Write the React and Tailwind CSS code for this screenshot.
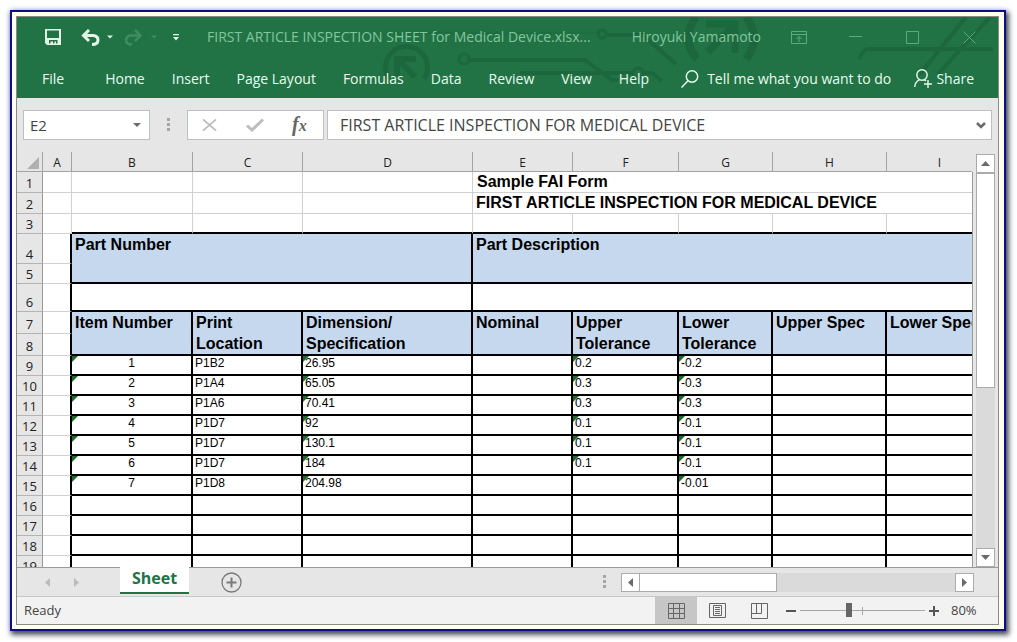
import React from "react";

const TABS = ["Home", "Insert", "Page Layout", "Formulas", "Data", "Review", "View", "Help"];

const ROWS = [
  { n: 9, cells: ["1", "P1B2", "26.95", "", "0.2", "-0.2"] },
  { n: 10, cells: ["2", "P1A4", "65.05", "", "0.3", "-0.3"] },
  { n: 11, cells: ["3", "P1A6", "70.41", "", "0.3", "-0.3"] },
  { n: 12, cells: ["4", "P1D7", "92", "", "0.1", "-0.1"] },
  { n: 13, cells: ["5", "P1D7", "130.1", "", "0.1", "-0.1"] },
  { n: 14, cells: ["6", "P1D7", "184", "", "0.1", "-0.1"] },
  { n: 15, cells: ["7", "P1D8", "204.98", "", "", "-0.01"] },
  { n: 16, cells: [] },
  { n: 17, cells: [] },
  { n: 18, cells: [] },
  { n: 19, cells: [] },
];

const HEADINGS = [
  ["Item Number"],
  ["Print", "Location"],
  ["Dimension/", "Specification"],
  ["Nominal"],
  ["Upper", "Tolerance"],
  ["Lower", "Tolerance"],
  ["Upper Spec"],
  ["Lower Spec"],
];

function Circuit() {
  return (
    <svg className="pointer-events-none absolute top-0 right-0" width="618" height="81" viewBox="380 17 618 81" fill="none" stroke="#1d673e" aria-hidden="true">
      <path d="M389 79 A21 21 0 1 1 424 79" strokeWidth="5" />
      <path d="M397 78 V59 H416 M399 61 L415 77" strokeWidth="6" />
      <circle cx="464" cy="59" r="5" strokeWidth="3" />
      <path d="M469 60 H585 L612 80 H618" strokeWidth="4" />
      <path d="M520 73 H632" strokeWidth="4" />
      <circle cx="638" cy="73" r="5" strokeWidth="3" />
      <path d="M644 73 H652 L662 81" strokeWidth="4" />
      <path d="M386 33 H597" strokeWidth="3" opacity=".4" />
      <circle cx="602" cy="34" r="4" strokeWidth="3" />
      <path d="M607 35 H642 L676 64" strokeWidth="4" />
      <path d="M696 17 Q680 38 697 59 M746 17 Q762 38 746 59" strokeWidth="8" />
      <path d="M706 24 H735 V53 M733 26 L708 52" strokeWidth="7" />
      <path d="M854 76 Q861 49 867 49 H993" strokeWidth="4" pathLength="100" strokeDasharray="100" strokeDashoffset="-11" />
      <path d="M920 74 L966 17 M938 74 L990 17" strokeWidth="4" />
    </svg>
  );
}

function Caret({ className }) {
  return (
    <svg className={className} width="8" height="4" viewBox="0 0 8 4" fill="currentColor" aria-hidden="true">
      <path d="M0 0H8L4 4Z" />
    </svg>
  );
}

function Dots({ className }) {
  return (
    <svg className={className} width="3" height="14" viewBox="0 0 3 14" fill="#a6a6a6" aria-hidden="true">
      <path d="M0 0h3v3H0zM0 5h3v3H0zM0 10h3v3H0z" />
    </svg>
  );
}

function TitleBar() {
  return (
    <div className="relative flex h-10 items-center">
      <div className="flex w-[190px] items-center pl-7 text-[#e3f7e6]">
        <button type="button" aria-label="Save">
          <svg className="block" width="16" height="16" viewBox="0 0 16 16">
            <path fill="currentColor" fillRule="evenodd" d="M0 0H16V16H2L0 14ZM2 1.500V9H14V1.500ZM4 11V14.500H5.500V12.500H8V14.500H9.500V12.500H11V14.500H12.500V11Z" />
          </svg>
        </button>
        <button type="button" aria-label="Undo" className="ml-5">
          <svg className="block" width="19" height="17" viewBox="0 0 19 17" fill="none" stroke="currentColor" strokeWidth="3">
            <path d="M2 6.500H12Q17 7 17 11Q17 15.500 11 15.500" />
            <path d="M8 1L2.500 6.500L8 12" />
          </svg>
        </button>
        <button type="button" aria-label="Undo history" className="ml-[7px]">
          <Caret className="block w-[6px]" />
        </button>
        <button type="button" aria-label="Redo" className="ml-[11px] text-[#3f8c60]">
          <svg className="block" width="19" height="17" viewBox="0 0 19 17" fill="none" stroke="currentColor" strokeWidth="2.500">
            <path d="M17 6.500H7Q2 7 2 11Q2 15.500 8 15.500" />
            <path d="M11 1L16.500 6.500L11 12" />
          </svg>
        </button>
        <button type="button" aria-label="Redo history" className="ml-2 text-[#3f8c60]">
          <Caret className="block w-[6px]" />
        </button>
        <button type="button" aria-label="Customize toolbar" className="ml-4">
          <svg className="block" width="6" height="7" viewBox="0 0 6 7" fill="currentColor">
            <path d="M0 0H6V1.300H0ZM0 3H6L3 6.500Z" />
          </svg>
        </button>
      </div>
      <h1 className="min-w-0 truncate text-[14px] leading-5 text-[#84c69c]">FIRST ARTICLE INSPECTION SHEET for Medical Device.xlsx...</h1>
      <span className="ml-auto shrink-0 pr-[9px] text-[14px] leading-5 text-[#84c69c]">Hiroyuki Yamamoto</span>
      <div className="flex shrink-0 text-[#5dab7c]">
        <button type="button" aria-label="Ribbon display options" className="flex w-[57px] justify-center">
          <svg width="16" height="13" viewBox="0 0 16 13" fill="none" stroke="currentColor">
            <path d="M.5 .5H15.500V12.500H.5ZM.5 3.500H15.500M8 11V5.500M5.500 8L8 5.500L10.500 8" />
          </svg>
        </button>
        <button type="button" aria-label="Minimize" className="flex w-[57px] justify-center">
          <svg width="13" height="13" viewBox="0 0 13 13" fill="none" stroke="currentColor">
            <path d="M0 5.500H13" />
          </svg>
        </button>
        <button type="button" aria-label="Maximize" className="flex w-[57px] justify-center">
          <svg width="13" height="13" viewBox="0 0 13 13" fill="none" stroke="currentColor">
            <path d="M.5 .5H12.500V12.500H.5Z" />
          </svg>
        </button>
        <button type="button" aria-label="Close" className="flex w-[57px] justify-center">
          <svg width="13" height="13" viewBox="0 0 13 13" fill="none" stroke="currentColor">
            <path d="M.5 .5L12.500 12.500M12.500 .5L.5 12.500" />
          </svg>
        </button>
      </div>
    </div>
  );
}

function Ribbon() {
  return (
    <nav className="relative flex h-[41px] items-center pt-[2px] pr-6 pl-[25px] text-[14px] leading-5 text-[#e9fbee]">
      <a href="#file" className="mr-[41px]">File</a>
      <div className="flex gap-[27px]">
        {TABS.map((t) => (
          <a key={t} href={"#" + t} className="whitespace-nowrap">{t}</a>
        ))}
      </div>
      <label className="ml-8 flex min-w-0 items-center gap-2">
        <svg className="shrink-0" width="18" height="18" viewBox="0 0 18 18" fill="none" stroke="currentColor" strokeWidth="1.500">
          <circle cx="11" cy="6.500" r="5.700" />
          <path d="M7 10.700L.5 17.500" />
        </svg>
        <input aria-label="Tell me what you want to do" placeholder="Tell me what you want to do" className="w-[188px] min-w-0 bg-transparent p-0 outline-none placeholder:text-[#e9fbee] placeholder:opacity-100" />
      </label>
      <button type="button" className="ml-auto flex shrink-0 items-center gap-1">
        <svg width="18" height="19" viewBox="0 0 18 19" fill="none" stroke="currentColor" strokeWidth="1.400">
          <circle cx="8" cy="6" r="5.200" />
          <path d="M.7 18Q1 12.500 5.500 10.800M10 10.700L12 12M14 11V19M10 15H18" />
        </svg>
        Share
      </button>
    </nav>
  );
}

function FormulaBar() {
  return (
    <div className="flex px-[6px] pt-3 text-[15px] text-[#444]">
      <div className="flex h-[30px] w-[127px] items-center border border-[#bcc0c4] bg-white">
        <input aria-label="Name box" defaultValue="E2" className="min-w-0 flex-1 bg-transparent pl-[6px] text-[15px] outline-none" />
        <button type="button" aria-label="Named ranges" className="mr-2 text-[#6a6a6a]">
          <Caret className="block" />
        </button>
      </div>
      <Dots className="mx-[17px] self-center" />
      <div className="flex h-[30px] w-[137px] items-center border border-[#bcc0c4] bg-white">
        <button type="button" aria-label="Cancel" className="ml-[14px]">
          <svg className="block" width="15" height="14" viewBox="0 0 16 14" fill="none" stroke="#bdbdbd" strokeWidth="2">
            <path d="M1 1L15 13M15 1L1 13" />
          </svg>
        </button>
        <button type="button" aria-label="Enter" className="ml-[29px]">
          <svg className="block" width="18" height="14" viewBox="0 0 18 14" fill="none" stroke="#bdbdbd" strokeWidth="3">
            <path d="M1 7.500L6 12L17 1.500" />
          </svg>
        </button>
        <button type="button" aria-label="Insert function" className="ml-7 font-['Liberation_Serif',serif] text-[20px] leading-6 font-bold text-[#666] italic">
          f<span className="text-[16px]">x</span>
        </button>
      </div>
      <div className="ml-[3px] flex h-[30px] min-w-0 flex-1 items-center border border-[#bcc0c4] bg-white">
        <input aria-label="Formula" defaultValue="FIRST ARTICLE INSPECTION FOR MEDICAL DEVICE" className="min-w-0 flex-1 bg-transparent pl-3 text-[16px] outline-none" />
        <button type="button" aria-label="Expand formula bar" className="mr-[5px]">
          <svg className="block" width="10" height="7" viewBox="0 0 10 7" fill="none" stroke="#6a6a6a" strokeWidth="2.500">
            <path d="M1 1L5 5L9 1" />
          </svg>
        </button>
      </div>
    </div>
  );
}

const rowHead = "border-r border-b border-r-[#9a9a9a] border-b-[#b4b4b4] bg-[#e6e6e6] p-0 text-center align-bottom font-normal text-[13px] leading-[18px] text-[#222] font-['Open_Sans',sans-serif]";
const light = "border-r border-b border-[#d0d0d0] p-0";
const edge = "border-r-2 border-b border-r-black border-b-[#d0d0d0] p-0";
const dark = "relative border-r-2 border-b-2 border-black p-0 last:border-r-0";
const band = "border-r-2 border-b-2 border-black bg-[#c5d8ee] p-0 pl-[3px] text-left align-top text-[16px] leading-[21px] font-bold last:border-r-0";

function RowHead({ n }) {
  return <th scope="row" className={rowHead}>{n}</th>;
}

function DataCell({ value, index }) {
  const flagged = value && index !== 1;
  return (
    <td className={dark}>
      <div className={"h-[18px] overflow-hidden text-[12px] leading-[14px] " + (index === 0 ? "text-center" : "pl-[2px]")}>{value}</div>
      {flagged && (
        <svg className="absolute top-0 left-0" width="6" height="6" viewBox="0 0 6 6" fill="#1d6b2a" aria-hidden="true">
          <path d="M0 0H6L0 6Z" />
        </svg>
      )}
    </td>
  );
}

function Sheet() {
  const blank = (k) => Array.from({ length: k }, (_, i) => <td key={i} className={light} />);
  return (
    <div className="min-w-0 flex-1 overflow-hidden">
      <table className="w-full table-fixed border-separate border-spacing-0 font-['Liberation_Sans',Arial,sans-serif] text-black">
        <colgroup>
          <col className="w-[26px]" />
          <col className="w-[29px]" />
          <col className="w-[121px]" />
          <col className="w-[110px]" />
          <col className="w-[170px]" />
          <col className="w-[100px]" />
          <col className="w-[106px]" />
          <col className="w-[94px]" />
          <col className="w-[114px]" />
          <col />
        </colgroup>
        <thead>
          <tr className="h-5 font-['Open_Sans',sans-serif] text-[12px] leading-[17px] text-[#222]">
            <td className="border-r border-b border-[#a3a3a3] p-0">
              <svg className="mt-1 ml-auto block" width="15" height="13" viewBox="0 0 15 13" fill="#b0b0b0" aria-hidden="true">
                <path d="M12 0V12H0Z" />
              </svg>
            </td>
            {["A", "B", "C", "D", "E", "F", "G", "H"].map((c) => (
              <th key={c} scope="col" className="border-r border-b border-[#a3a3a3] p-0 pt-[2px] font-normal">{c}</th>
            ))}
            <th scope="col" className="border-b border-[#a3a3a3] p-0 pt-[2px] pl-5 font-normal">I</th>
          </tr>
        </thead>
        <tbody className="bg-white">
          <tr className="h-[21px]">
            <RowHead n={1} />
            {blank(4)}
            <td colSpan={5} className="border-b border-[#d0d0d0] p-0 pl-1 text-[16px] leading-5 font-bold">Sample FAI Form</td>
          </tr>
          <tr className="h-[21px]">
            <RowHead n={2} />
            {blank(4)}
            <td colSpan={5} className="border-b border-[#d0d0d0] p-0 pl-[3px] text-[16px] leading-5 font-bold whitespace-nowrap">FIRST ARTICLE INSPECTION FOR MEDICAL DEVICE</td>
          </tr>
          <tr className="h-5">
            <RowHead n={3} />
            <td className={light} />
            {Array.from({ length: 8 }, (_, i) => (
              <td key={i} className="border-r border-b-2 border-r-[#d0d0d0] border-b-black p-0 last:border-r-0" />
            ))}
          </tr>
          <tr className="h-[30px]">
            <RowHead n={4} />
            <td className={edge} />
            <th scope="colgroup" colSpan={3} rowSpan={2} className={band}>Part Number</th>
            <th scope="colgroup" colSpan={5} rowSpan={2} className={band}>Part Description</th>
          </tr>
          <tr className="h-5">
            <RowHead n={5} />
            <td className={edge} />
          </tr>
          <tr className="h-7">
            <RowHead n={6} />
            <td className={edge} />
            <td colSpan={3} className={dark} />
            <td colSpan={5} className={dark} />
          </tr>
          <tr className="h-[22px]">
            <RowHead n={7} />
            <td className={edge} />
            {HEADINGS.map((lines) => (
              <th key={lines.join(" ")} scope="col" rowSpan={2} className={band + " overflow-hidden whitespace-nowrap"}>
                {lines.map((l) => (
                  <span key={l} className="block">{l}</span>
                ))}
              </th>
            ))}
          </tr>
          <tr className="h-[22px]">
            <RowHead n={8} />
            <td className={edge} />
          </tr>
          {ROWS.map(({ n, cells }) => (
            <tr key={n} className="h-5">
              <RowHead n={n} />
              <td className={edge} />
              {Array.from({ length: 8 }, (_, i) => (
                <DataCell key={i} index={i} value={cells[i]} />
              ))}
            </tr>
          ))}
        </tbody>
      </table>
    </div>
  );
}

function ArrowButton({ label, d }) {
  return (
    <button type="button" aria-label={label} className="flex size-[19px] shrink-0 items-center justify-center border border-[#ababab] bg-white">
      <svg width="9" height="9" viewBox="0 0 9 9" fill="#6a6a6a"><path d={d} /></svg>
    </button>
  );
}

function SheetBar() {
  return (
    <div className="flex h-[29px] shrink-0 border-t border-[#9a9a9a] bg-[#e6e6e6]">
      <div className="flex w-[103px] items-center gap-6 pl-[28px]">
        <button type="button" aria-label="Previous sheet">
          <svg className="block" width="5" height="9" viewBox="0 0 5 9" fill="#bcbcbc"><path d="M5 0V9L0 4.500Z" /></svg>
        </button>
        <button type="button" aria-label="Next sheet">
          <svg className="block" width="5" height="9" viewBox="0 0 5 9" fill="#bcbcbc"><path d="M0 0V9L5 4.500Z" /></svg>
        </button>
      </div>
      <button type="button" className="-mt-px h-[27px] w-[69px] border-b-2 border-[#217346] bg-white pb-1 text-[16px] leading-5 font-bold text-[#217346]">Sheet</button>
      <button type="button" aria-label="New sheet" className="ml-8">
        <svg className="block" width="21" height="21" viewBox="0 0 21 21" fill="none" stroke="#7a7a7a">
          <circle cx="10.500" cy="10.500" r="9.500" strokeWidth="1.300" />
          <path d="M10.500 5.500V15.500M5.500 10.500H15.500" strokeWidth="2" />
        </svg>
      </button>
      <Dots className="mr-[15px] ml-auto self-center" />
      <div className="mr-6 flex w-[353px] items-center">
        <ArrowButton label="Scroll left" d="M7 0V9L2 4.500Z" />
        <div className="h-[19px] flex-1 bg-[#dadada]">
          <div className="h-[19px] w-[137px] border border-l-0 border-[#ababab] bg-white" />
        </div>
        <ArrowButton label="Scroll right" d="M2 0V9L7 4.500Z" />
      </div>
    </div>
  );
}

function StatusBar() {
  return (
    <footer className="flex h-7 shrink-0 items-center border-t border-[#c8c8c8] bg-[#f2f2f2] text-[13px] text-[#444]">
      <span className="pl-[7px]">Ready</span>
      <div className="ml-auto flex h-full">
        <button type="button" aria-label="Normal view" className="flex w-[42px] items-center justify-center bg-[#c6c6c6]">
          <svg width="17" height="16" viewBox="0 0 17 16" fill="none" stroke="#666">
            <path d="M.5 .5H16.500V15.500H.5ZM.5 5.500H16.500M.5 10.500H16.500M5.500 .5V15.500M11.500 .5V15.500" />
          </svg>
        </button>
        <button type="button" aria-label="Page layout view" className="flex w-[41px] items-center justify-center">
          <svg width="17" height="15" viewBox="0 0 17 15" fill="none" stroke="#666">
            <path d="M.5 .5H16.500V14.500H.5ZM4.500 2.500H12.500V12.500H4.500ZM6 4.500H11M6 6.500H11M6 8.500H11M6 10.500H11" />
          </svg>
        </button>
        <button type="button" aria-label="Page break preview" className="flex w-[42px] items-center justify-center">
          <svg width="17" height="16" viewBox="0 0 17 16" fill="none" stroke="#666">
            <path d="M.5 .5H16.500V15.500H.5ZM.5 10.500H10.500V.5M5.500 .5V10.500" />
          </svg>
        </button>
      </div>
      <button type="button" aria-label="Zoom out" className="ml-[6px]">
        <svg className="block" width="10" height="10" viewBox="0 0 10 10" stroke="#555" strokeWidth="2"><path d="M0 5H10" /></svg>
      </button>
      <div className="relative mx-1 flex h-4 w-[125px] items-center">
        <span className="absolute top-1 left-[62px] h-2 w-px bg-[#a6a6a6]" />
        <input type="range" aria-label="Zoom" min="10" max="190" defaultValue="80" className="relative h-4 w-full appearance-none bg-transparent [&::-webkit-slider-runnable-track]:h-px [&::-webkit-slider-runnable-track]:bg-[#a6a6a6] [&::-webkit-slider-thumb]:-mt-[7px] [&::-webkit-slider-thumb]:h-[14px] [&::-webkit-slider-thumb]:w-[6px] [&::-webkit-slider-thumb]:appearance-none [&::-webkit-slider-thumb]:bg-[#666]" />
      </div>
      <button type="button" aria-label="Zoom in">
        <svg className="block" width="10" height="10" viewBox="0 0 10 10" stroke="#555" strokeWidth="2"><path d="M0 5H10M5 0V10" /></svg>
      </button>
      <span className="w-[59px] pl-3">80%</span>
    </footer>
  );
}

export default function App() {
  return (
    <div className="flex h-screen min-h-[400px] bg-white pt-[10px] pr-[11px] pb-[11px] pl-[10px] font-['Open_Sans','Noto_Sans',sans-serif]">
      <div className="flex min-w-0 flex-1 border-2 border-[#0c0c86] bg-[#fffff0] p-1 pr-[5px] shadow-[2px_3px_5px_1px_rgba(0,0,0,0.65),0_0_5px_rgba(120,150,255,0.5)]">
        <main className="flex min-w-0 flex-1 flex-col border border-[#8a8a8a] bg-[#e6e6e6]">
          <header className="relative shrink-0 bg-[#217346]">
            <Circuit />
            <TitleBar />
            <Ribbon />
          </header>
          <FormulaBar />
          <div className="flex min-h-0 flex-1 pt-3">
            <Sheet />
            <div className="flex w-[26px] shrink-0 pt-5">
              <div className="w-px bg-[#9a9a9a]" />
              <div className="-mt-[18px] flex min-h-0 flex-1 flex-col items-center">
                <ArrowButton label="Scroll up" d="M0 7L4.500 2L9 7Z" />
                <div className="w-[19px] min-h-0 flex-1 bg-[#dadada]">
                  <div className="h-[215px] border border-[#ababab] bg-white" />
                </div>
                <ArrowButton label="Scroll down" d="M0 2L4.500 7L9 2Z" />
              </div>
            </div>
          </div>
          <SheetBar />
          <StatusBar />
        </main>
      </div>
    </div>
  );
}
